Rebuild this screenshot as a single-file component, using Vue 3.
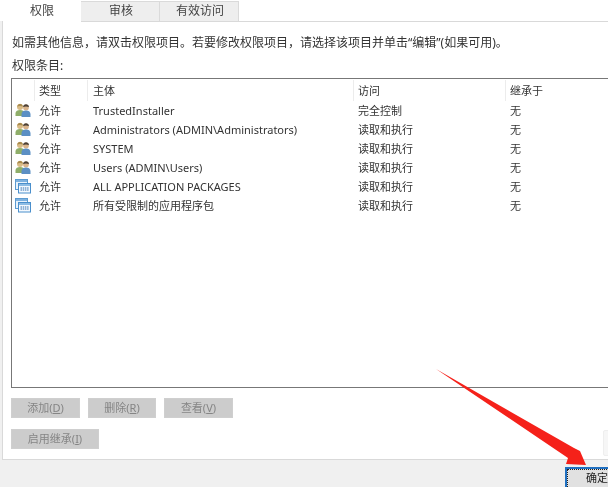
<script setup>
const rows = [
  { icon: 'user', type: '允许', name: 'TrustedInstaller', access: '完全控制', from: '无' },
  { icon: 'user', type: '允许', name: 'Administrators (ADMIN\\Administrators)', access: '读取和执行', from: '无' },
  { icon: 'user', type: '允许', name: 'SYSTEM', access: '读取和执行', from: '无' },
  { icon: 'user', type: '允许', name: 'Users (ADMIN\\Users)', access: '读取和执行', from: '无' },
  { icon: 'pkg', type: '允许', name: 'ALL APPLICATION PACKAGES', access: '读取和执行', from: '无' },
  { icon: 'pkg', type: '允许', name: '所有受限制的应用程序包', access: '读取和执行', from: '无' },
]
</script>

<template>
  <div class="page">
    <div class="tabs">
      <div class="tab active">权限</div>
      <div class="tab">审核</div>
      <div class="tab">有效访问</div>
    </div>
    <div class="panel">
      <p class="info">如需其他信息，请双击权限项目。若要修改权限项目，请选择该项目并单击“编辑”(如果可用)。</p>
      <p class="label">权限条目:</p>
      <div class="list">
        <div class="row head">
          <span class="c-icon"></span>
          <span class="c-type">类型</span>
          <span class="c-name">主体</span>
          <span class="c-access">访问</span>
          <span class="c-from">继承于</span>
        </div>
        <div v-for="r in rows" :key="r.name" class="row">
          <span class="c-icon">
            <svg v-if="r.icon === 'user'" width="16" height="15" viewBox="0 0 16 15">
              <circle cx="5" cy="4" r="3" fill="#d8bb86" />
              <path d="M2 3.5 Q3 .8 5 .8 Q7.5 .8 8 3.5 Q5 2.5 2 3.5 Z" fill="#a98a4c" />
              <path d="M0.5 13 V10 Q1 7 5 7 Q9 7 9.5 10 V13 Z" fill="#8fae6a" />
              <circle cx="11" cy="4.5" r="2.9" fill="#d9b48c" />
              <path d="M8 4 Q8.5 1.2 11 1.2 Q13.5 1.2 14 4 Q11 2.8 8 4 Z" fill="#4b4036" />
              <path d="M6.5 14 V11 Q7 7.6 11 7.6 Q15 7.6 15.5 11 V14 Z" fill="#5b8fc4" />
            </svg>
            <svg v-else width="16" height="15" viewBox="0 0 16 15">
              <rect x=".5" y=".5" width="12" height="10" fill="#e8f2fb" stroke="#5c9bd1" />
              <rect x="1" y="1" width="11" height="2" fill="#7fb2df" />
              <rect x="3.5" y="4.5" width="12" height="9.5" fill="#f4f9fe" stroke="#4a8fcc" />
              <rect x="4" y="5" width="11" height="2" fill="#8dbce4" />
              <path d="M5.5 9h8.5M5.5 11h8.5" stroke="#2f6fb0" stroke-dasharray="1.5 .7" />
            </svg>
          </span>
          <span class="c-type">{{ r.type }}</span>
          <span class="c-name">{{ r.name }}</span>
          <span class="c-access">{{ r.access }}</span>
          <span class="c-from">{{ r.from }}</span>
        </div>
      </div>
      <div class="actions">
        <button class="btn">添加(<u>D</u>)</button>
        <button class="btn narrow">删除(<u>R</u>)</button>
        <button class="btn">查看(<u>V</u>)</button>
      </div>
      <div class="actions second">
        <button class="btn wide">启用继承(<u>I</u>)</button>
      </div>
    </div>
    <div class="footer">
      <button class="ok">确定</button>
    </div>
    <span class="edge"></span>
    <svg class="arrow" width="608" height="487" viewBox="0 0 608 487">
      <path d="M436 369 L574 448 L580 451 L586 465 L566 464 L568 458 Z" fill="#f5211a" />
    </svg>
  </div>
</template>

<style>
html, body { margin: 0; background: #f0f0f0; overflow: hidden; }
</style>

<style scoped>
.page {
  position: relative;
  width: 608px;
  height: 487px;
  overflow: hidden;
  background: #f0f0f0;
  font-family: "Noto Sans", "Noto Sans CJK SC", sans-serif;
  font-size: 11px;
  color: #333;
  filter: blur(0.3px);
}
.tabs {
  display: flex;
  height: 21px;
  padding: 1px 0 0 3px;
  box-sizing: border-box;
  background: #fff;
}
.tab {
  width: 79px;
  height: 20px;
  padding-left: 2px;
  box-sizing: border-box;
  background: #eeeeee;
  border: 1px solid #dadada;
  border-left: 0;
  border-bottom: 0;
  text-align: center;
  line-height: 18px;
  font-size: 12px;
  color: #444;
}
.tab.active {
  width: 78px;
  height: 21px;
  padding-left: 0;
  background: #fff;
  border: 0;
  line-height: 19px;
  position: relative;
  z-index: 1;
}
.panel {
  height: 439px;
  box-sizing: border-box;
  margin-left: 2px;
  padding: 0 0 0 8px;
  background: #fff;
  border: 1px solid #d9d9d9;
  border-right: 0;
  overflow: hidden;
}
.info {
  margin: 13px 0 0 1px;
  font-size: 12px;
  line-height: 16px;
  white-space: nowrap;
  color: #333;
}
.label {
  margin: 7px 0 0 1px;
  font-size: 12px;
  line-height: 16px;
  color: #333;
}
.list {
  width: 640px;
  height: 310px;
  margin-top: 4px;
  box-sizing: border-box;
  border: 1px solid #777;
  background: #fff;
}
.row {
  display: flex;
  height: 19px;
  align-items: center;
  line-height: 19px;
  white-space: nowrap;
}
.row.head {
  height: 22px;
  padding-top: 1px;
  box-sizing: border-box;
}
.row.head span + span { height: 21px; line-height: 21px; box-shadow: inset 1px 0 0 #ececec; }
.c-icon { width: 22px; padding-left: 3px; box-sizing: border-box; display: flex; align-items: center; flex: none; }
.c-type { width: 53px; padding-left: 5px; box-sizing: border-box; flex: none; }
.c-name { width: 266px; padding-left: 6px; box-sizing: border-box; flex: none; }
.c-access { width: 152px; padding-left: 5px; box-sizing: border-box; flex: none; }
.c-from { width: 100px; padding-left: 5px; box-sizing: border-box; flex: none; }
.actions {
  display: flex;
  gap: 8px;
  margin-top: 10px;
}
.actions.second { margin-top: 11px; }
.btn {
  width: 69px;
  height: 20px;
  padding: 0;
  border: 1px solid #cfcfcf;
  background: #cccccc;
  color: #858585;
  font: inherit;
  line-height: 18px;
}
.btn.narrow { width: 68px; }
.btn.wide { width: 88px; }
.footer {
  height: 27px;
  display: flex;
  justify-content: flex-end;
  padding-top: 7px;
  box-sizing: border-box;
}
.ok {
  width: 80px;
  flex: none;
  height: 24px;
  margin-right: -37px;
  padding: 0 16px 4px 0;
  border: 2px solid #1f6fc0;
  outline: 1px dotted #222;
  outline-offset: -3px;
  background: #e1e1e1;
  color: #222;
  font: inherit;
  white-space: nowrap;
}
.edge {
  position: absolute;
  right: -4px;
  top: 430px;
  width: 7px;
  height: 24px;
  background: #f6f6f6;
  border: 1px solid #eeeeee;
  border-radius: 2px;
}
.arrow {
  position: absolute;
  left: 0;
  top: 0;
  pointer-events: none;
}
</style>
